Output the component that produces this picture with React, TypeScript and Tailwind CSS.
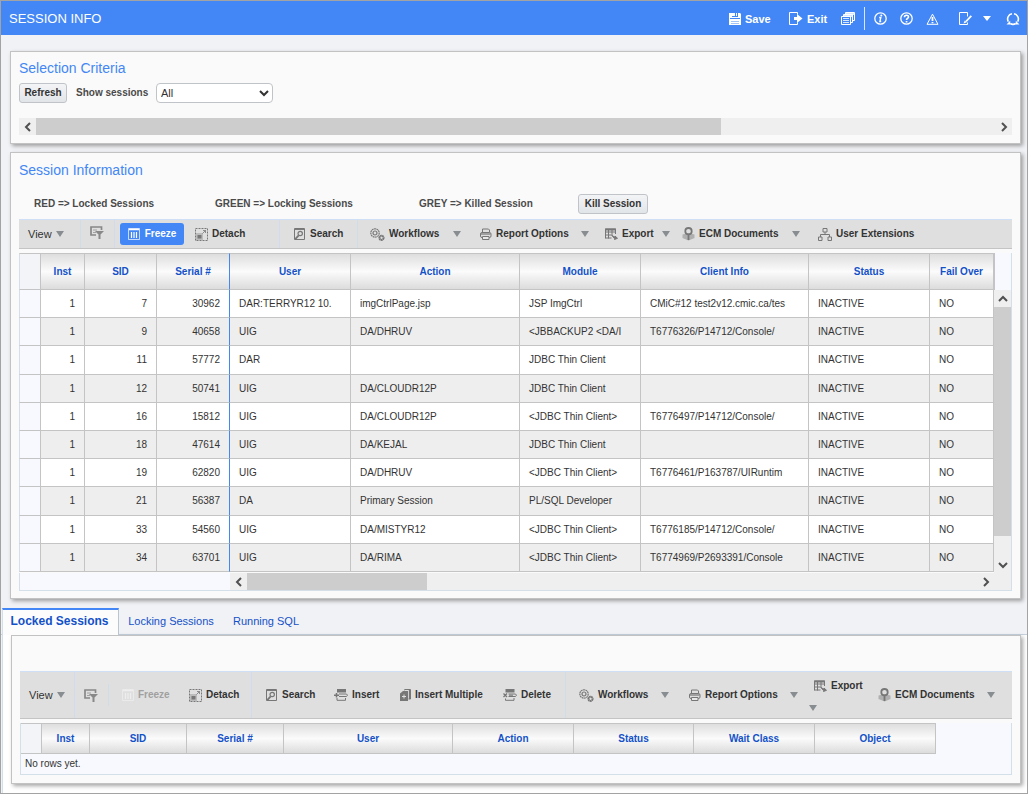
import type {ReactNode} from "react";

const sessions = [
    ["1", "7", "30962", "DAR:TERRYR12 10.", "imgCtrlPage.jsp", "JSP ImgCtrl", "CMiC#12 test2v12.cmic.ca/tes", "INACTIVE", "NO"],
    ["1", "9", "40658", "UIG", "DA/DHRUV", "<JBBACKUP2 <DA/I", "T6776326/P14712/Console/", "INACTIVE", "NO"],
    ["1", "11", "57772", "DAR", "", "JDBC Thin Client", "", "INACTIVE", "NO"],
    ["1", "12", "50741", "UIG", "DA/CLOUDR12P", "JDBC Thin Client", "", "INACTIVE", "NO"],
    ["1", "16", "15812", "UIG", "DA/CLOUDR12P", "<JDBC Thin Client>", "T6776497/P14712/Console/", "INACTIVE", "NO"],
    ["1", "18", "47614", "UIG", "DA/KEJAL", "JDBC Thin Client", "", "INACTIVE", "NO"],
    ["1", "19", "62820", "UIG", "DA/DHRUV", "<JDBC Thin Client>", "T6776461/P163787/UIRuntim", "INACTIVE", "NO"],
    ["1", "21", "56387", "DA", "Primary Session", "PL/SQL Developer", "", "INACTIVE", "NO"],
    ["1", "33", "54560", "UIG", "DA/MISTYR12", "<JDBC Thin Client>", "T6776185/P14712/Console/", "INACTIVE", "NO"],
    ["1", "34", "63701", "UIG", "DA/RIMA", "<JDBC Thin Client>", "T6774969/P2693391/Console", "INACTIVE", "NO"],
];

const sessionColumns = [
    {label: "Inst", width: "w-[44px]"},
    {label: "SID", width: "w-[72px]"},
    {label: "Serial #", width: "w-[73px]"},
    {label: "User", width: "w-[121px]"},
    {label: "Action", width: "w-[169px]"},
    {label: "Module", width: "w-[121px]"},
    {label: "Client Info", width: "w-[168px]"},
    {label: "Status", width: "w-[121px]"},
    {label: "Fail Over", width: "w-auto"},
];

const lockedColumns = [
    {label: "Inst", width: "w-[48px]"},
    {label: "SID", width: "w-[97px]"},
    {label: "Serial #", width: "w-[97px]"},
    {label: "User", width: "w-[169px]"},
    {label: "Action", width: "w-[121px]"},
    {label: "Status", width: "w-[120px]"},
    {label: "Wait Class", width: "w-[121px]"},
    {label: "Object", width: "w-[121px]"},
];

const headGradient = "bg-linear-to-b from-[#dedede] via-[#fbfbfb] to-[#dcdcdc]";

/* ---------- icons ---------- */

function Svg({children, w = 14, h = 14}: { children: ReactNode; w?: number; h?: number }) {
    return (
        <svg width={w} height={h} viewBox={`0 0 ${w} ${h}`} fill="none" stroke="currentColor" className="shrink-0"
             aria-hidden="true">
            {children}
        </svg>
    );
}

const SaveIcon = () => (
    <Svg w={12} h={12}>
        <path d="M0 0h11l1 1v11H0z" fill="currentColor" stroke="none"/>
        <path d="M3 0h6v4H3z" fill="#4287f5" stroke="none"/>
        <path d="M3 0h3v3H3zM7 0h1v3H7z" fill="currentColor" stroke="none"/>
        <path d="M1 5.500h10" stroke="#4287f5"/>
        <path d="M2 8.500h8M2 10.500h8" stroke="#4287f5" opacity=".5"/>
    </Svg>
);

const ExitIcon = () => (
    <Svg w={14} h={13}>
        <path d="M8.500 2.500V.5h-8v12h8v-2"/>
        <path d="M5 5h3V2l5.500 4.500L8 11V8H5z" fill="currentColor" stroke="none"/>
    </Svg>
);

const FormsIcon = () => (
    <Svg w={14} h={14}>
        <path d="M4.500 3V.5h9v8H11M2.500 5V2.500h9v8H10M.5 4.500h9v8h-9z"/>
        <path d="M4 1h9.500v2H4zM2 3h9.500v2H2z" fill="currentColor" stroke="none" opacity=".8"/>
        <path d="M2 6.500h6M2 8.500h6M2 10.500h6" opacity=".8"/>
    </Svg>
);

const InfoIcon = () => (
    <Svg w={13} h={13}>
        <circle cx="6.500" cy="6.500" r="5.700" strokeWidth="1.300"/>
        <circle cx="7.300" cy="3.500" r="1" fill="currentColor" stroke="none"/>
        <path d="M5.200 5.500h1.600l-.9 4h1.300" strokeWidth="1.400"/>
    </Svg>
);

const HelpIcon = () => (
    <Svg w={13} h={13}>
        <circle cx="6.500" cy="6.500" r="5.700" strokeWidth="1.300"/>
        <path d="M4.500 5.200c0-2.600 4-2.500 4-.3 0 1.400-2 1.400-2 3" strokeWidth="1.600"/>
        <path d="M5.700 9h1.700v1.500H5.700z" fill="currentColor" stroke="none"/>
    </Svg>
);

const WarningIcon = () => (
    <Svg w={13} h={12}>
        <path d="M6.500 1.200L12 11.300H1z"/>
        <path d="M6.500 4v4M6.500 9v1.300" strokeWidth="1.800"/>
    </Svg>
);

const NoteIcon = () => (
    <Svg w={13} h={13}>
        <path d="M8.500 4.500V.5h-8v12h8v-2"/>
        <path d="M12.300 3.800L7 9.500" strokeWidth="1.800"/>
        <path d="M4.500 11.500l1.300-3 2 1.800z" fill="currentColor" stroke="none"/>
    </Svg>
);

const ReloadIcon = () => (
    <Svg w={14} h={14}>
        <path d="M2.300 9.600A5.300 5.300 0 0 1 6 1.800M8 1.800a5.300 5.300 0 0 1 3.700 7.800M9.800 11.500a5.300 5.300 0 0 1-5.600 0"
              strokeWidth="1.600"/>
        <path d="M.5 12.500h3.700V8.800zM13.500 12.500H9.800V8.800z" fill="currentColor" stroke="none"/>
    </Svg>
);

const FilterIcon = () => (
    <Svg w={14} h={13}>
        <path d="M11.500 4V1H1v8h5" strokeWidth="1.700"/>
        <path d="M3 4h4M3 6.500h3" opacity=".7"/>
        <path d="M5 5h9l-3.500 3.500V13h-2V8.500z" fill="currentColor" stroke="none"/>
    </Svg>
);

const FreezeIcon = () => (
    <Svg w={12} h={12}>
        <path d="M.5 .5h11v11H.5z" opacity=".7"/>
        <path d="M1 1.500h10" strokeWidth="1.500"/>
        <path d="M3.500 4v6M6 4v6M8.500 4v6" strokeWidth="1.200"/>
    </Svg>
);

const DetachIcon = () => (
    <Svg w={13} h={13}>
        <path d="M.5 .5h12v12H.5z" strokeDasharray="2 1"/>
        <path d="M1 5h7v7H1z" fill="currentColor" stroke="none" opacity=".35"/>
        <path d="M2.500 7h4v3.500h-4z" fill="currentColor" stroke="none"/>
        <path d="M7.500 5.500l3-3M8 2.500h2.500V5" opacity=".8"/>
    </Svg>
);

const SearchIcon = () => (
    <Svg w={12} h={12}>
        <path d="M.5 .5h10v11H.5z"/>
        <path d="M1 1.200h9" strokeWidth="1.500"/>
        <circle cx="6.200" cy="5.500" r="2.200" strokeWidth="1.200"/>
        <path d="M4.700 7.300L1 11.300" strokeWidth="1.800"/>
    </Svg>
);

const GearsIcon = () => (
    <Svg w={15} h={13}>
        <circle cx="5" cy="5" r="4.200" strokeWidth="1.200" strokeDasharray="1.800 .5"/>
        <circle cx="5" cy="5" r="2" strokeWidth="1.200"/>
        <circle cx="11.500" cy="9.800" r="2.100" strokeWidth="2" strokeDasharray="1.600 .3"/>
    </Svg>
);

const PrinterIcon = () => (
    <Svg w={12} h={12}>
        <path d="M2.500 4.500V1h6l1 1v2.500"/>
        <rect x=".5" y="4.500" width="10.500" height="5" rx="1.500"/>
        <path d="M1 5h9.500v2H1z" fill="currentColor" stroke="none" opacity=".6"/>
        <path d="M2.500 8.500h6.500v3H2.500z" fill="#e8e8e8"/>
    </Svg>
);

const ExportIcon = () => (
    <Svg w={13} h={12}>
        <path d="M.5 1h10M.5 4h10M.5 7h6M.5 10h6M.5 .5v10M3.500 1v9.500M7 1v7M10.500 1v5"/>
        <path d="M1 .5h10v2H1z" fill="currentColor" stroke="none"/>
        <path d="M7 7.500l3 1.800V8l2.500 2.300-3 1.200v-.9z" fill="currentColor"/>
    </Svg>
);

const EcmIcon = () => (
    <Svg w={13} h={14}>
        <path d="M.5 7.500L6.500 6l6 1.500v3.500l-6 2.500-6-2.500z" fill="currentColor" stroke="none" opacity=".45"/>
        <circle cx="6.500" cy="4.200" r="3.200" strokeWidth="1.800"/>
        <path d="M6.500 7v6" strokeWidth="1.800"/>
    </Svg>
);

const TreeIcon = () => (
    <Svg w={14} h={13}>
        <path d="M5 .5h4v3.500H5zM.5 9h3.500v3.500H.5zM10 9h3.500v3.500H10zM7 4v3M2.500 9V6.500h9V9"/>
    </Svg>
);

const InsertIcon = () => (
    <Svg w={14} h={12}>
        <path d="M3 0h9v3.500H3z" fill="currentColor" stroke="none"/>
        <path d="M5 5h7.500l1 1.200-1 1.300H5M3 9v2.300h8.500V9"/>
        <path d="M0 6.200h5M2.500 4v4.500" strokeWidth="1.500"/>
    </Svg>
);

const InsertMultipleIcon = () => (
    <Svg w={11} h={12}>
        <path d="M0 4.500L3 2h5v10H0z" fill="currentColor" stroke="none"/>
        <path d="M4 1.200L5 .5h5.500V10H8.500"/>
        <path d="M9.500 1v9" strokeWidth="1.300"/>
        <path d="M2 7.500h4M4 5.500v4" stroke="#dfdfdf"/>
    </Svg>
);

const DeleteIcon = () => (
    <Svg w={14} h={12}>
        <path d="M2.500 0h9v3.500h-9z" fill="currentColor" stroke="none"/>
        <path d="M5.500 5h7l1 1.200-1 1.300h-7M2.500 9.500v1.800H11V9M6 6.200h4"/>
        <path d="M.5 4.500l3.500 3.500M4 4.500L.5 8" strokeWidth="1.300"/>
    </Svg>
);

const Caret = () => (
    <Svg w={8} h={6}>
        <path d="M0 0h8L4 6z" fill="#888d91" stroke="none"/>
    </Svg>
);

const chevrons = {
    left: "M7 1L3 5l4 4",
    right: "M3 1l4 4-4 4",
    up: "M1 7l4-4 4 4",
    down: "M1 3l4 4 4-4",
};

/* ---------- building blocks ---------- */

function ScrollArrow({dir}: { dir: keyof typeof chevrons }) {
    return (
        <button type="button" aria-label={`Scroll ${dir}`}
                className="flex size-[17px] shrink-0 items-center justify-center bg-[#efefef] text-[#505050]">
            <svg width="10" height="10" viewBox="0 0 10 10" fill="none" stroke="currentColor" strokeWidth="2">
                <path d={chevrons[dir]}/>
            </svg>
        </button>
    );
}

function Panel({children, className = ""}: { children: ReactNode; className?: string }) {
    return (
        <section
            className={`border border-[#c2c2c2] bg-[#fafafa] shadow-[2px_2px_4px_rgba(0,0,0,0.35)] ${className}`}>
            {children}
        </section>
    );
}

function HeaderAction({icon, label, text, className = ""}: {
    icon: ReactNode;
    label: string;
    text?: boolean;
    className?: string
}) {
    return (
        <button type="button" aria-label={label} className={`flex shrink-0 items-center gap-1 ${className}`}>
            {icon}
            {text && <span>{label}</span>}
        </button>
    );
}

// One slot of a toolbar: icon + label, optionally with the caret of a menu
function ToolItem({icon, label, width, menu}: { icon: ReactNode; label: string; width: string; menu?: boolean }) {
    return (
        <div className={`flex shrink-0 items-center justify-between ${width}`}>
            <button type="button" className="flex items-center gap-1 font-bold whitespace-nowrap text-[#333]">
                <span className="flex text-[#777]">{icon}</span>
                {label}
            </button>
            {menu && (
                <button type="button" aria-label={`${label} menu`}>
                    <Caret/>
                </button>
            )}
        </div>
    );
}

function ViewMenu() {
    return (
        <button type="button" className="flex items-center gap-1 text-[11px] text-[#333]">
            View <Caret/>
        </button>
    );
}

const Separator = ({className = ""}: { className?: string }) => (
    <span className={`w-px shrink-0 self-stretch bg-[#d0dcea] ${className}`}/>
);

function FilterButton() {
    return (
        <button type="button" aria-label="Query by example" className="text-[#888]">
            <FilterIcon/>
        </button>
    );
}

/* ---------- sections ---------- */

function TopBar() {
    return (
        <header className="flex h-[34px] items-center bg-[#4287f5] pt-px pl-2 text-[11px] font-bold text-white">
            <h1 className="mr-auto text-[13px] leading-4 font-normal">SESSION INFO</h1>
            <HeaderAction icon={<SaveIcon/>} label="Save" text className="w-[60px]"/>
            <HeaderAction icon={<ExitIcon/>} label="Exit" text className="w-[52px]"/>
            <HeaderAction icon={<FormsIcon/>} label="Forms"/>
            <span className="mx-[9px] h-[23px] w-px bg-white/80"/>
            <div className="flex items-center gap-[13px]">
                <HeaderAction icon={<InfoIcon/>} label="Info"/>
                <HeaderAction icon={<HelpIcon/>} label="Help"/>
                <HeaderAction icon={<WarningIcon/>} label="Warnings"/>
            </div>
            <HeaderAction icon={<NoteIcon/>} label="Notes" className="ml-5"/>
            <button type="button" aria-label="Notes menu" className="ml-[11px]">
                <svg width="8" height="5" viewBox="0 0 8 5" fill="currentColor">
                    <path d="M0 0h8L4 5z"/>
                </svg>
            </button>
            <HeaderAction icon={<ReloadIcon/>} label="Reload" className="mr-[7px] ml-[15px]"/>
        </header>
    );
}

function SelectionCriteria() {
    return (
        <Panel className="px-2 pt-[7px] pb-2">
            <h2 className="text-[14px] leading-[18px] text-[#4287f5]">Selection Criteria</h2>
            <div className="mt-[6px] flex h-5 items-center">
                <button type="button"
                        className="h-5 w-12 rounded-[3px] border border-[#c0c4c8] bg-linear-to-b from-[#f3f4f6] to-[#e2e5e8] font-bold text-[#333]">
                    Refresh
                </button>
                <label htmlFor="show" className="ml-[9px] w-20 font-bold whitespace-nowrap text-[#4a4a4a]">
                    Show sessions
                </label>
                <select id="show"
                        className="h-5 w-[117px] rounded-[4px] border border-[#c0c4c8] bg-white text-[11px] text-[#333]">
                    <option>All</option>
                </select>
            </div>
            <div className="mt-[15px] flex bg-[#efefef]">
                <ScrollArrow dir="left"/>
                <div className="flex-1">
                    <div className="h-full w-5/7 bg-[#cdcdcd]"/>
                </div>
                <ScrollArrow dir="right"/>
            </div>
        </Panel>
    );
}

function SessionTable() {
    return (
        <div className="mt-1 flex border-r border-b border-[#d3dfe9]">
            <div className="min-w-0 flex-1">
                <table className="h-[319px] w-full table-fixed border-separate border-spacing-0 text-[#333]">
                    <thead>
                    <tr className="h-[37px]">
                        <th aria-label="Select row"
                            className="w-[22px] border border-[#c4c4c4] border-l-[#d3dfe9] bg-[#f3f4f8]"/>
                        {sessionColumns.map((col, i) => (
                            <th key={col.label}
                                className={`border-y border-r border-y-[#c4c4c4] text-[#1351c8] ${headGradient} ${col.width} ${i === 2 ? "border-r-[#4287f5]" : "border-r-[#c4c4c4]"}`}>
                                {col.label}
                            </th>
                        ))}
                    </tr>
                    </thead>
                    <tbody>
                    {sessions.map((row, r) => (
                        <tr key={row[2]} className={r % 2 ? "bg-[#eeeeee]" : "bg-white"}>
                            <td className="border-r border-b border-l border-[#c4c4c4] border-l-[#d3dfe9] bg-[#f7f9fe]"/>
                            {row.map((cell, i) => (
                                <td key={i}
                                    className={`border-r border-b border-b-[#c4c4c4] pt-px pl-[9px] whitespace-nowrap ${i < 3 ? "pr-[9px] text-right" : ""} ${i === 2 ? "border-r-[#4287f5]" : "border-r-[#c4c4c4]"}`}>
                                    {cell}
                                </td>
                            ))}
                        </tr>
                    ))}
                    </tbody>
                </table>
                <div className="flex pt-px">
                    <div className="w-[211px] border-l border-[#d3dfe9] bg-[#f7f9fe]"/>
                    <div className="flex flex-1 bg-[#efefef]">
                        <ScrollArrow dir="left"/>
                        <div className="flex-1">
                            <div className="h-full w-[180px] bg-[#cdcdcd]"/>
                        </div>
                        <ScrollArrow dir="right"/>
                    </div>
                </div>
            </div>
            <div className="flex w-[17px] flex-col bg-[#efefef]">
                <div className="h-[37px] border-l border-[#c4c4c4] bg-[#f7f9fe]"/>
                <ScrollArrow dir="up"/>
                <div className="flex-1">
                    <div className="h-[92%] bg-[#cdcdcd]"/>
                </div>
                <ScrollArrow dir="down"/>
                <div className="h-[17px]"/>
            </div>
        </div>
    );
}

function SessionInformation() {
    return (
        <Panel className="mt-2 px-2 pt-2 pb-[7px]">
            <h2 className="text-[14px] leading-[18px] text-[#4287f5]">Session Information</h2>
            <div className="mt-[15px] flex h-5 items-center pl-[15px] font-bold text-[#4a4a4a]">
                <span className="w-[181px]">RED =&gt; Locked Sessions</span>
                <span className="w-[204px]">GREEN =&gt; Locking Sessions</span>
                <span className="w-[159px]">GREY =&gt; Killed Session</span>
                <button type="button"
                        className="h-5 w-[70px] rounded-[3px] border border-[#c0c4c8] bg-linear-to-b from-[#f3f4f6] to-[#e2e5e8] font-bold text-[#333]">
                    Kill Session
                </button>
            </div>
            <div
                className="mt-[5px] flex h-[30px] items-center border-t border-b border-t-[#cfdff5] border-b-[#c4c4c4] bg-[#dfdfdf] pl-[9px]">
                <div className="w-[52px]"><ViewMenu/></div>
                <Separator/>
                <div className="ml-[9px] w-6"><FilterButton/></div>
                <Separator/>
                <button type="button"
                        className="ml-[5px] flex h-[22px] w-16 items-center justify-center gap-[5px] rounded-[3px] bg-[#4287f5] font-bold text-white">
                    <FreezeIcon/>
                    Freeze
                </button>
                <div className="ml-[11px] flex self-stretch">
                    <ToolItem icon={<DetachIcon/>} label="Detach" width="w-[84px]"/>
                    <Separator/>
                    <span className="w-[14px]"/>
                    <ToolItem icon={<SearchIcon/>} label="Search" width="w-[63px]"/>
                    <Separator/>
                    <span className="w-[12px]"/>
                    <ToolItem icon={<GearsIcon/>} label="Workflows" width="w-[91px]" menu/>
                    <span className="w-[19px]"/>
                    <ToolItem icon={<PrinterIcon/>} label="Report Options" width="w-[109px]" menu/>
                    <span className="w-[16px]"/>
                    <ToolItem icon={<ExportIcon/>} label="Export" width="w-[65px]" menu/>
                    <span className="w-[12px]"/>
                    <ToolItem icon={<EcmIcon/>} label="ECM Documents" width="w-[118px]" menu/>
                    <span className="w-[18px]"/>
                    <ToolItem icon={<TreeIcon/>} label="User Extensions" width="w-[100px]"/>
                </div>
            </div>
            <SessionTable/>
        </Panel>
    );
}

function Tabs() {
    return (
        <div role="tablist" className="mt-[9px] flex h-[27px] border-b border-[#c5d2dd] pl-px text-[11px] text-[#1351c8]">
            <button type="button" role="tab" aria-selected="true"
                    className="-mb-px w-[117px] border-t-2 border-r border-l border-t-[#4287f5] border-r-[#b9c6d1] border-l-[#d3dfe9] bg-[#fcfcfd] pr-0.5 pb-1 text-[12px] font-bold whitespace-nowrap">
                Locked Sessions
            </button>
            <button type="button" role="tab" aria-selected="false" className="w-[104px]">Locking Sessions</button>
            <button type="button" role="tab" aria-selected="false" className="w-[86px]">Running SQL</button>
        </div>
    );
}

function LockedSessions() {
    return (
        <div className="ml-px border-l border-[#d3dfe9] bg-white pr-[6px] pb-[9px] pl-2">
            <Panel className="px-2 pt-[35px] pb-2">
                <div
                    className="flex h-12 items-stretch border-t border-b border-t-[#cfdff5] border-b-[#c4c4c4] bg-[#dfdfdf] pl-[9px]">
                    <div className="flex w-[45px] items-center"><ViewMenu/></div>
                    <Separator/>
                    <div className="ml-[9px] flex w-6 items-center"><FilterButton/></div>
                    <Separator className="my-3"/>
                    <button type="button" disabled
                            className="ml-[13px] flex w-[67px] items-center gap-1 font-bold text-[#a0a0a0]">
                        <span className="text-[#eeeeee]"><FreezeIcon/></span>
                        Freeze
                    </button>
                    <ToolItem icon={<DetachIcon/>} label="Detach" width="w-[62px]"/>
                    <Separator/>
                    <span className="w-[14px]"/>
                    <ToolItem icon={<SearchIcon/>} label="Search" width="w-[68px]"/>
                    <ToolItem icon={<InsertIcon/>} label="Insert" width="w-[66px]"/>
                    <ToolItem icon={<InsertMultipleIcon/>} label="Insert Multiple" width="w-[103px]"/>
                    <ToolItem icon={<DeleteIcon/>} label="Delete" width="w-[62px]"/>
                    <Separator/>
                    <span className="w-[13px]"/>
                    <ToolItem icon={<GearsIcon/>} label="Workflows" width="w-[90px]" menu/>
                    <span className="w-[20px]"/>
                    <ToolItem icon={<PrinterIcon/>} label="Report Options" width="w-[109px]" menu/>
                    {/* the caret of Export wraps under its label */}
                    <div className="ml-[11px] flex w-[69px] flex-col items-start justify-center gap-3">
                        <span className="pl-[5px]"><ToolItem icon={<ExportIcon/>} label="Export" width="w-auto"/></span>
                        <button type="button" aria-label="Export menu"><Caret/></button>
                    </div>
                    <ToolItem icon={<EcmIcon/>} label="ECM Documents" width="w-[117px]" menu/>
                </div>
                <div className="mt-1 border-r border-b border-l border-[#d3dfe9] bg-[#f7f9fe]">
                    <table className="w-[915px] table-fixed border-separate border-spacing-0">
                        <thead>
                        <tr className="h-[31px]">
                            <th aria-label="Select row"
                                className="w-[21px] border-y border-r border-[#c4c4c4] bg-[#f3f4f8]"/>
                            {lockedColumns.map((col) => (
                                <th key={col.label}
                                    className={`border-y border-r border-[#c4c4c4] text-[#1351c8] ${headGradient} ${col.width}`}>
                                    {col.label}
                                </th>
                            ))}
                        </tr>
                        </thead>
                    </table>
                    <p className="h-5 pl-1 leading-5 text-[#333]">No rows yet.</p>
                </div>
            </Panel>
        </div>
    );
}

export default function App() {
    return (
        <div
            className="border border-[#a3a3a3] bg-[#f1f2f5] font-['Liberation_Sans',Arial,sans-serif] text-[10px] leading-[14px]">
            <TopBar/>
            <main className="pt-4">
                <div className="pr-[6px] pl-[9px]">
                    <SelectionCriteria/>
                    <SessionInformation/>
                </div>
                <Tabs/>
                <LockedSessions/>
            </main>
        </div>
    );
}
